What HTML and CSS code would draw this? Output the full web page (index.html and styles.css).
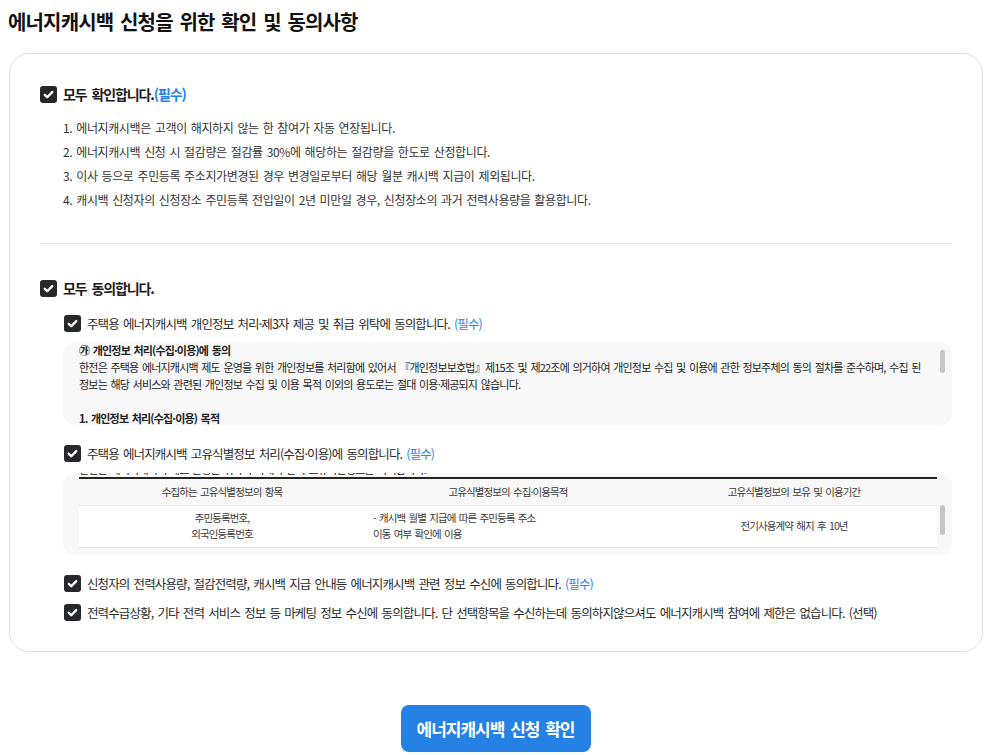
FILE: index.html
```html
<!DOCTYPE html>
<html lang="ko">
<head>
  <meta charset="UTF-8">
  <meta name="viewport" content="width=device-width, initial-scale=1.0">
  <title>에너지캐시백 신청 확인 및 동의</title>
  <link rel="stylesheet" href="styles.css">
</head>
<body>

  <h1 class="page-title">에너지캐시백 신청을 위한 확인 및 동의사항</h1>

  <div class="agree-card">
    <!-- 확인 사항 -->
    <label class="check-row check-main">
      <span class="check-box"><svg viewBox="0 0 16 16"><path d="M4 8.3l2.7 2.6L12 5.4"/></svg></span>
      <span>모두 확인합니다.<em class="req">(필수)</em></span>
    </label>

    <ol class="notice-list">
      <li>1. 에너지캐시백은 고객이 해지하지 않는 한 참여가 자동 연장됩니다.</li>
      <li>2. 에너지캐시백 신청 시 절감량은 절감률 30%에 해당하는 절감량을 한도로 산정합니다.</li>
      <li>3. 이사 등으로 주민등록 주소지가변경된 경우 변경일로부터 해당 월분 캐시백 지급이 제외됩니다.</li>
      <li>4. 캐시백 신청자의 신청장소 주민등록 전입일이 2년 미만일 경우, 신청장소의 과거 전력사용량을 활용합니다.</li>
    </ol>

    <hr class="divider">

    <!-- 동의 사항 -->
    <label class="check-row check-main check-all">
      <span class="check-box"><svg viewBox="0 0 16 16"><path d="M4 8.3l2.7 2.6L12 5.4"/></svg></span>
      <span>모두 동의합니다.</span>
    </label>

    <div class="sub-list">
      <label class="check-row check-sub">
        <span class="check-box"><svg viewBox="0 0 16 16"><path d="M4 8.3l2.7 2.6L12 5.4"/></svg></span>
        <span>주택용 에너지캐시백 개인정보 처리·제3자 제공 및 취급 위탁에 동의합니다. <em class="req-light">(필수)</em></span>
      </label>

      <div class="scroll-box box-privacy">
        <p class="terms-title">㉮ 개인정보 처리(수집·이용)에 동의</p>
        <p class="terms-text">한전은 주택용 에너지캐시백 제도 운영을 위한 개인정보를 처리함에 있어서 『개인정보보호법』제15조 및 제22조에 의거하여 개인정보 수집 및 이용에 관한 정보주체의 동의 절차를 준수하며, 수집 된 정보는 해당 서비스와 관련된 개인정보 수집 및 이용 목적 이외의 용도로는 절대 이용·제공되지 않습니다.</p>
        <p class="terms-title terms-gap">1. 개인정보 처리(수집·이용) 목적</p>
        <span class="scroll-thumb thumb-privacy"></span>
      </div>

      <label class="check-row check-sub">
        <span class="check-box"><svg viewBox="0 0 16 16"><path d="M4 8.3l2.7 2.6L12 5.4"/></svg></span>
        <span>주택용 에너지캐시백 고유식별정보 처리(수집·이용)에 동의합니다. <em class="req-light">(필수)</em></span>
      </label>

      <div class="scroll-box box-unique">
        <div class="cut-line"><p class="terms-text">한전은 에너지캐시백 제도 운영을 위하여 아래와 같이 고유식별정보를 처리합니다.</p></div>
        <table class="terms-table">
          <thead>
            <tr>
              <th>수집하는 고유식별정보의 항목</th>
              <th>고유식별정보의 수집·이용목적</th>
              <th>고유식별정보의 보유 및 이용기간</th>
            </tr>
          </thead>
          <tbody>
            <tr>
              <td>주민등록번호,<br>외국인등록번호</td>
              <td class="cell-left">- 캐시백 월별 지급에 따른 주민등록 주소<br>이동 여부 확인에 이용</td>
              <td>전기사용계약 해지 후 10년</td>
            </tr>
          </tbody>
        </table>
        <span class="scroll-thumb thumb-unique"></span>
      </div>

      <label class="check-row check-sub row-spaced">
        <span class="check-box"><svg viewBox="0 0 16 16"><path d="M4 8.3l2.7 2.6L12 5.4"/></svg></span>
        <span>신청자의 전력사용량, 절감전력량, 캐시백 지급 안내등 에너지캐시백 관련 정보 수신에 동의합니다. <em class="req-light">(필수)</em></span>
      </label>

      <label class="check-row check-sub row-tight">
        <span class="check-box"><svg viewBox="0 0 16 16"><path d="M4 8.3l2.7 2.6L12 5.4"/></svg></span>
        <span>전력수급상황, 기타 전력 서비스 정보 등 마케팅 정보 수신에 동의합니다. 단 선택항목을 수신하는데 동의하지않으셔도 에너지캐시백 참여에 제한은 없습니다. (선택)</span>
      </label>
    </div>
  </div>

  <div class="submit-wrap">
    <button class="submit-btn">에너지캐시백 신청 확인</button>
  </div>

</body>
</html>
```

FILE: styles.css
```css
* {
  margin: 0;
  padding: 0;
  box-sizing: border-box;
}

body {
  margin: 8px;
  background: #fff;
  color: #333;
  font-family: "Noto Sans CJK KR", "Noto Sans", sans-serif;
}

.page-title {
  font-size: 20px;
  line-height: 28px;
  font-weight: 700;
  color: #111;
  letter-spacing: -0.85px;
  word-spacing: 2px;
  margin-bottom: 17px;
}

.agree-card {
  margin-left: 1px;
  border: 1px solid #dedede;
  border-radius: 20px;
  padding: 30px 30px 29px 30px;
}

/* checkbox rows */
.check-row {
  display: flex;
  align-items: center;
  gap: 6px;
  height: 20px;
  cursor: pointer;
}

.check-box {
  flex: none;
  width: 17px;
  height: 17px;
  border-radius: 3px;
  background: #26282c;
  display: flex;
  align-items: center;
  justify-content: center;
}

.check-box svg {
  width: 15px;
  height: 15px;
  fill: none;
  stroke: #fff;
  stroke-width: 2.5;
  stroke-linecap: round;
  stroke-linejoin: round;
}

.check-main {
  font-size: 14px;
  font-weight: 700;
  color: #1d1d1f;
  letter-spacing: -1.1px;
  word-spacing: 2px;
}

.check-all {
  margin-top: 34px;
}

.req {
  font-style: normal;
  color: #2680e6;
}

.req-light {
  font-style: normal;
  color: #2f86e8;
}

.notice-list {
  list-style: none;
  margin-top: 12px;
  padding-left: 23px;
  font-size: 12px;
  line-height: 24px;
  color: #333;
  letter-spacing: -0.38px;
  word-spacing: 1px;
}

.divider {
  border: none;
  border-top: 1px solid #e3e3e3;
  margin-top: 31px;
}

.sub-list {
  margin-top: 15px;
  padding-left: 23px;
}

.check-sub {
  padding-left: 1px;
  font-size: 12.5px;
  color: #2a2a2a;
  letter-spacing: -0.88px;
  word-spacing: 1.5px;
}

.row-spaced {
  margin-top: 18px;
}

.row-tight {
  margin-top: 9px;
}

/* terms boxes */
.scroll-box {
  position: relative;
  overflow: hidden;
  background: #f8f8f8;
  border-radius: 12px;
  padding: 0 15px 0 16px;
  margin: 9px 0 18px;
}

.box-privacy {
  height: 83px;
}

.box-unique {
  height: 82px;
  margin-top: 10px;
}

.terms-title,
.terms-text {
  font-size: 11px;
  line-height: 17px;
  color: #222;
  letter-spacing: -0.8px;
  word-spacing: 1.2px;
  word-break: keep-all;
}

.terms-title {
  font-weight: 700;
}

.terms-gap {
  margin-top: 17px;
}

/* previous text line, scrolled almost out of view */
.cut-line {
  height: 4px;
  overflow: hidden;
  display: flex;
  flex-direction: column;
  justify-content: flex-end;
}

.cut-line p {
  flex: none;
  margin-bottom: -1px;
}

.scroll-thumb {
  position: absolute;
  right: 7px;
  width: 5px;
  border-radius: 3px;
  background: #c6c6c6;
}

.thumb-privacy {
  top: 8px;
  height: 23px;
}

.thumb-unique {
  top: 32px;
  height: 30px;
}

.terms-table {
  width: 100%;
  table-layout: fixed;
  border-collapse: collapse;
  border-top: 2px solid #222;
  font-size: 10.5px;
  color: #3a3a3a;
  letter-spacing: -0.9px;
  word-spacing: 1.2px;
}

.terms-table th {
  height: 27px;
  font-weight: 400;
  text-align: center;
  border-bottom: 1px solid #e6e6e6;
}

.terms-table td {
  height: 42px;
  background: #fff;
  text-align: center;
  line-height: 16px;
  border-bottom: 1px solid #e6e6e6;
}

.terms-table .cell-left {
  text-align: left;
  padding-left: 8px;
}

/* submit */
.submit-wrap {
  display: flex;
  justify-content: center;
  margin-top: 53px;
}

.submit-btn {
  width: 190px;
  height: 47px;
  border: none;
  border-radius: 8px;
  background: #2581e4;
  color: #fff;
  font-family: inherit;
  font-size: 17px;
  font-weight: 700;
  letter-spacing: -1px;
  word-spacing: 2px;
  cursor: pointer;
}
```
